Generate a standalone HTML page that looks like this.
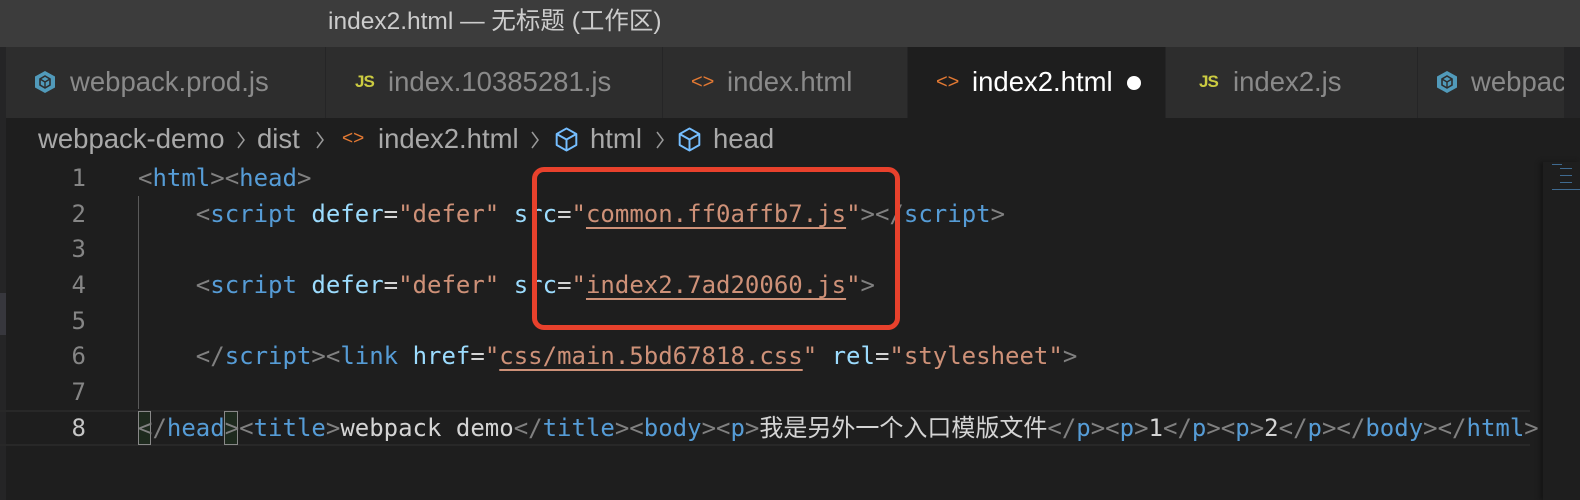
<!DOCTYPE html><html><head><meta charset="utf-8"><style>
body{margin:0;width:1580px;height:500px;background:#1e1e1e;overflow:hidden;position:relative;font-family:"Liberation Sans","Noto Sans CJK SC",sans-serif}
.title{position:absolute;left:0;top:0;width:1580px;height:47px;background:#3c3c3c;color:#ccc;font-size:24.5px;line-height:44px}
.title span{position:absolute;left:328px}
.tabs{position:absolute;left:0;top:47px;width:1580px;height:71px;background:#252526}
.tab{position:absolute;top:0;height:71px;background:#2d2d2d;border-right:1px solid #252526;color:#8a8a8a;font-size:27.5px;line-height:70px;box-sizing:border-box;white-space:nowrap;overflow:hidden}
.tab.act{background:#1e1e1e;color:#fff}
.tab>*{position:absolute;top:0}
.js{color:#cbcb41;font-weight:bold;font-size:17px;letter-spacing:-1px}
.ht{color:#e37933;font-size:20px}
.bc{position:absolute;top:121px;color:#a9a9a9;font-size:27.5px;line-height:36px;white-space:nowrap}
.sep{position:absolute;top:124px;color:#999;font-size:20px;line-height:30px;transform:scaleX(0.6)}
.code{position:absolute;left:0;top:160px;font-family:"DejaVu Sans Mono","Noto Sans CJK SC",monospace;font-size:24px;color:#d4d4d4}
.ln{position:absolute;left:40px;width:46px;text-align:right;color:#858585}
.l{position:absolute;left:138px;white-space:pre;height:36px;line-height:36px}
.t{color:#808080}.n{color:#569cd6}.a{color:#9cdcfe}.s{color:#ce9178}.u{text-decoration:underline;text-underline-offset:5px}
</style></head><body>
<div class="title"><span>index2.html — 无标题 (工作区)</span></div>
<div class="tabs">
<div class="tab" style="left:6px;width:320px"><svg width="22" height="24" viewBox="0 0 22 24" style="left:28px;top:23px"><path d="M11 1L21 6.5V17.5L11 23L1 17.5V6.5Z" fill="#519aba"/><path d="M11 6L16 9V15L11 18L6 15V9Z" fill="none" stroke="#2d2d2d" stroke-width="1.6"/><path d="M11 12V18M11 12L6 9M11 12L16 9" stroke="#2d2d2d" stroke-width="1.4"/></svg><span style="left:64px">webpack.prod.js</span></div>
<div class="tab" style="left:326px;width:337px"><span class="js" style="left:29px">JS</span><span style="left:62px">index.10385281.js</span></div>
<div class="tab" style="left:663px;width:245px"><span class="ht" style="left:28px">&lt;&gt;</span><span style="left:64px">index.html</span></div>
<div class="tab act" style="left:908px;width:258px"><span class="ht" style="left:28px">&lt;&gt;</span><span style="left:64px">index2.html</span><span style="left:219px;top:29px;width:14px;height:14px;border-radius:50%;background:#fff"></span></div>
<div class="tab" style="left:1166px;width:252px"><span class="js" style="left:33px">JS</span><span style="left:67px">index2.js</span></div>
<div class="tab" style="left:1418px;width:147px"><svg width="22" height="24" viewBox="0 0 22 24" style="left:18px;top:23px"><path d="M11 1L21 6.5V17.5L11 23L1 17.5V6.5Z" fill="#519aba"/><path d="M11 6L16 9V15L11 18L6 15V9Z" fill="none" stroke="#2d2d2d" stroke-width="1.6"/><path d="M11 12V18M11 12L6 9M11 12L16 9" stroke="#2d2d2d" stroke-width="1.4"/></svg><span style="left:53px">webpack.dev.js</span></div>
</div>
<div style="position:absolute;left:0;top:118px;width:6px;height:382px;background:#252526"></div>
<div style="position:absolute;left:0;top:293px;width:6px;height:42px;background:#37373d"></div>
<span class="bc" style="left:38px">webpack-demo</span>
<svg class="sep" width="10" height="20" viewBox="0 0 10 20" style="left:236px;top:130px;transform:none"><path d="M2 2L8 10L2 18" fill="none" stroke="#999" stroke-width="1.5"/></svg>
<span class="bc" style="left:257px">dist</span>
<svg class="sep" width="10" height="20" viewBox="0 0 10 20" style="left:315px;top:130px;transform:none"><path d="M2 2L8 10L2 18" fill="none" stroke="#999" stroke-width="1.5"/></svg>
<span class="bc" style="left:342px;font-size:19px;color:#e37933">&lt;&gt;</span>
<span class="bc" style="left:378px">index2.html</span>
<svg class="sep" width="10" height="20" viewBox="0 0 10 20" style="left:530px;top:130px;transform:none"><path d="M2 2L8 10L2 18" fill="none" stroke="#999" stroke-width="1.5"/></svg>
<svg width="27" height="27" viewBox="0 0 22 22" style="position:absolute;left:553px;top:126px"><path d="M11 2L19 6.5V15.5L11 20L3 15.5V6.5ZM3 6.5L11 11L19 6.5M11 11V20" fill="none" stroke="#75beff" stroke-width="1.6" stroke-linejoin="round"/></svg>
<span class="bc" style="left:590px">html</span>
<svg class="sep" width="10" height="20" viewBox="0 0 10 20" style="left:655px;top:130px;transform:none"><path d="M2 2L8 10L2 18" fill="none" stroke="#999" stroke-width="1.5"/></svg>
<svg width="27" height="27" viewBox="0 0 22 22" style="position:absolute;left:676px;top:126px"><path d="M11 2L19 6.5V15.5L11 20L3 15.5V6.5ZM3 6.5L11 11L19 6.5M11 11V20" fill="none" stroke="#75beff" stroke-width="1.6" stroke-linejoin="round"/></svg>
<span class="bc" style="left:713px">head</span>
<div style="position:absolute;left:138px;top:196px;width:1px;height:213px;background:#5a5a5a"></div>
<div style="position:absolute;left:0;top:410px;width:1530px;height:36px;border-top:2px solid #282828;border-bottom:2px solid #282828;box-sizing:border-box"></div>
<div style="position:absolute;left:138px;top:411px;width:13px;height:34px;border:1px solid #888;background:#1e2a1e;box-sizing:border-box"></div>
<div style="position:absolute;left:224px;top:411px;width:14px;height:34px;border:1px solid #888;background:#1e2a1e;box-sizing:border-box"></div>
<div class="code">
<div class="ln" style="top:0;line-height:36px">1</div>
<div class="ln" style="top:36px;line-height:36px">2</div>
<div class="ln" style="top:71px;line-height:36px">3</div>
<div class="ln" style="top:107px;line-height:36px">4</div>
<div class="ln" style="top:143px;line-height:36px">5</div>
<div class="ln" style="top:178px;line-height:36px">6</div>
<div class="ln" style="top:214px;line-height:36px">7</div>
<div class="ln" style="top:250px;line-height:36px;color:#c6c6c6">8</div>
<div class="l" style="top:0"><span class="t">&lt;</span><span class="n">html</span><span class="t">&gt;&lt;</span><span class="n">head</span><span class="t">&gt;</span></div>
<div class="l" style="top:36px">    <span class="t">&lt;</span><span class="n">script</span> <span class="a">defer</span>=<span class="s">"defer"</span> <span class="a">src</span>=<span class="s">"<span class="u">common.ff0affb7.js</span>"</span><span class="t">&gt;&lt;/</span><span class="n">script</span><span class="t">&gt;</span></div>
<div class="l" style="top:107px">    <span class="t">&lt;</span><span class="n">script</span> <span class="a">defer</span>=<span class="s">"defer"</span> <span class="a">src</span>=<span class="s">"<span class="u">index2.7ad20060.js</span>"</span><span class="t">&gt;</span></div>
<div class="l" style="top:178px">    <span class="t">&lt;/</span><span class="n">script</span><span class="t">&gt;&lt;</span><span class="n">link</span> <span class="a">href</span>=<span class="s">"<span class="u">css/main.5bd67818.css</span>"</span> <span class="a">rel</span>=<span class="s">"stylesheet"</span><span class="t">&gt;</span></div>
<div class="l" style="top:250px"><span class="t">&lt;/</span><span class="n">head</span><span class="t">&gt;&lt;</span><span class="n">title</span><span class="t">&gt;</span>webpack demo<span class="t">&lt;/</span><span class="n">title</span><span class="t">&gt;&lt;</span><span class="n">body</span><span class="t">&gt;&lt;</span><span class="n">p</span><span class="t">&gt;</span>我是另外一个入口模版文件<span class="t">&lt;/</span><span class="n">p</span><span class="t">&gt;&lt;</span><span class="n">p</span><span class="t">&gt;</span>1<span class="t">&lt;/</span><span class="n">p</span><span class="t">&gt;&lt;</span><span class="n">p</span><span class="t">&gt;</span>2<span class="t">&lt;/</span><span class="n">p</span><span class="t">&gt;&lt;/</span><span class="n">body</span><span class="t">&gt;&lt;/</span><span class="n">html</span><span class="t">&gt;</span></div>
</div>
<div style="position:absolute;left:1543px;top:162px;width:37px;height:338px;background:#1e1e1e;box-shadow:-3px 0 4px #151515"></div>
<div style="position:absolute;left:1552px;top:163px;width:28px;height:40px">
<div style="height:1px;width:10px;background:#3f6a90;margin-top:1px"></div>
<div style="height:1px;width:12px;background:#3f6a90;margin:3px 0 0 8px"></div>
<div style="height:1px;width:12px;background:#3f6a90;margin:6px 0 0 8px"></div>
<div style="height:1px;width:12px;background:#3f6a90;margin:6px 0 0 8px"></div>
<div style="height:1px;width:28px;background:#3f6a90;margin-top:6px"></div>
</div>
<div style="position:absolute;left:532px;top:167px;width:368px;height:163px;border:5px solid #e8412c;border-radius:12px;box-sizing:border-box"></div>
</body></html>
